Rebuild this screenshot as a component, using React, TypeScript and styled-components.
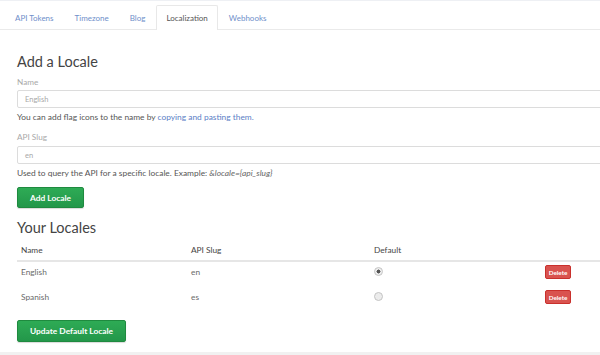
import React from 'react'
import styled, { createGlobalStyle } from 'styled-components'

const GlobalStyle = createGlobalStyle`
  html, body {
    margin: 0;
    padding: 0;
    background: #fff;
    overflow: hidden;
  }
  body {
    font-family: Lato, 'Open Sans', sans-serif;
    color: #555;
    -webkit-font-smoothing: antialiased;
  }
`

const Page = styled.div`
  width: 600px;
  height: 355px;
  overflow: hidden;
  border-top: 1px solid #eef0f4;
  box-sizing: border-box;
`

const TabBar = styled.ul`
  display: flex;
  list-style: none;
  margin: 4px 0 0 0;
  padding: 0 0 0 5px;
  height: 24px;
  border-bottom: 1px solid #eaeaea;
`

const Tab = styled.li<{ active?: boolean }>`
  display: flex;
  align-items: center;
  margin-right: 1px;
  padding: 0 9px;
  box-sizing: border-box;
  font-size: 8px;
  color: ${({ active }) => (active ? '#555' : '#6f8fca')};
  background: ${({ active }) => (active ? '#fff' : 'transparent')};
  border: 1px solid ${({ active }) => (active ? '#e8e8e8' : 'transparent')};
  border-bottom: none;
  border-radius: 2px 2px 0 0;
  height: ${({ active }) => (active ? '25px' : '24px')};
`

const Content = styled.div`
  width: 640px;
  padding-left: 17px;
`

const Heading = styled.h3`
  margin: 23px 0 0 0;
  font-size: 14.5px;
  line-height: 18px;
  font-weight: 400;
  color: #444;
`

const Label = styled.div<{ gap: number }>`
  margin-top: ${({ gap }) => gap}px;
  font-size: 8.2px;
  line-height: 12px;
  color: #a9a9a9;
`

const Input = styled.div<{ gap: number }>`
  margin-top: ${({ gap }) => gap}px;
  height: 18px;
  box-sizing: border-box;
  border: 1px solid #dcdcdc;
  border-radius: 2px;
  padding-left: 7px;
  display: flex;
  align-items: center;
  font-size: 7.5px;
  color: #a8a8a8;
`

const Help = styled.p`
  margin: 3px 0 0 0;
  font-size: 8.4px;
  line-height: 12px;
  color: #555;

  a {
    color: #5b80c6;
    text-decoration: none;
  }
  em {
    color: #666;
  }
`

const GreenButton = styled.button<{ gap: number; h: number }>`
  display: block;
  margin-top: ${({ gap }) => gap}px;
  height: ${({ h }) => h}px;
  padding: 0 12px;
  border: 1px solid #1f8a3f;
  border-radius: 2px;
  background: linear-gradient(#2eab55, #23974a);
  color: #fff;
  font-family: Lato, sans-serif;
  font-weight: 700;
  font-size: 8.4px;
  box-shadow: 0 1px 1px rgba(0, 0, 0, 0.15);
`

const SubHeading = styled(Heading)`
  margin-top: 11px;
`

const Table = styled.div`
  margin-top: 3px;
`

const Row = styled.div<{ head?: boolean }>`
  display: grid;
  grid-template-columns: 170px 183px 171px 80px;
  height: ${({ head }) => (head ? '20px' : '25px')};
  align-items: ${({ head }) => (head ? 'center' : 'start')};
  border-bottom: ${({ head }) => (head ? '2px solid #e6e6e6' : 'none')};
  font-size: 8.3px;
  color: ${({ head }) => (head ? '#444' : '#6a6a6a')};
`

const Cell = styled.div`
  padding: 0 4px;
  line-height: 14px;
`

const BodyCell = styled(Cell)`
  padding-top: 3px;
  height: 14px;
  display: flex;
  align-items: center;
`

const Radio = styled.span<{ checked?: boolean }>`
  width: 7px;
  height: 7px;
  margin-top: -1px;
  border-radius: 50%;
  border: 1px solid #c4c4c4;
  background: ${({ checked }) =>
    checked ? 'radial-gradient(circle, #555 0 1.8px, #eee 2.2px)' : '#ececec'};
`

const DeleteButton = styled.button`
  height: 14px;
  width: 26px;
  padding: 0;
  border: 1px solid #c9302c;
  border-radius: 2px;
  background: #d9534f;
  color: #fff;
  font-family: Lato, sans-serif;
  font-weight: 700;
  font-size: 6.3px;
`

const Footer = styled.div`
  margin-top: 10px;
  border-top: 3px solid #f1f1f1;
`

const tabs = ['API Tokens', 'Timezone', 'Blog', 'Localization', 'Webhooks']
const locales = [
  { name: 'English', slug: 'en', def: true },
  { name: 'Spanish', slug: 'es', def: false },
]

export default function App() {
  return (
    <Page>
      <GlobalStyle />
      <TabBar>
        {tabs.map((t) => (
          <Tab key={t} active={t === 'Localization'}>
            {t}
          </Tab>
        ))}
      </TabBar>
      <Content>
        <Heading>Add a Locale</Heading>
        <Label gap={5}>Name</Label>
        <Input gap={2}>English</Input>
        <Help>
          You can add flag icons to the name by <a href="#">copying and pasting them.</a>
        </Help>
        <Label gap={8}>API Slug</Label>
        <Input gap={3}>en</Input>
        <Help>
          Used to query the API for a specific locale. Example: <em>&amp;locale=&#123;api_slug&#125;</em>
        </Help>
        <GreenButton gap={8} h={21}>Add Locale</GreenButton>
        <SubHeading>Your Locales</SubHeading>
        <Table>
          <Row head>
            <Cell>Name</Cell>
            <Cell>API Slug</Cell>
            <Cell>Default</Cell>
            <Cell />
          </Row>
          {locales.map((l) => (
            <Row key={l.slug}>
              <BodyCell>{l.name}</BodyCell>
              <BodyCell>{l.slug}</BodyCell>
              <BodyCell>
                <Radio checked={l.def} />
              </BodyCell>
              <BodyCell>
                <DeleteButton>Delete</DeleteButton>
              </BodyCell>
            </Row>
          ))}
        </Table>
        <GreenButton gap={8} h={22}>Update Default Locale</GreenButton>
      </Content>
      <Footer />
    </Page>
  )
}
